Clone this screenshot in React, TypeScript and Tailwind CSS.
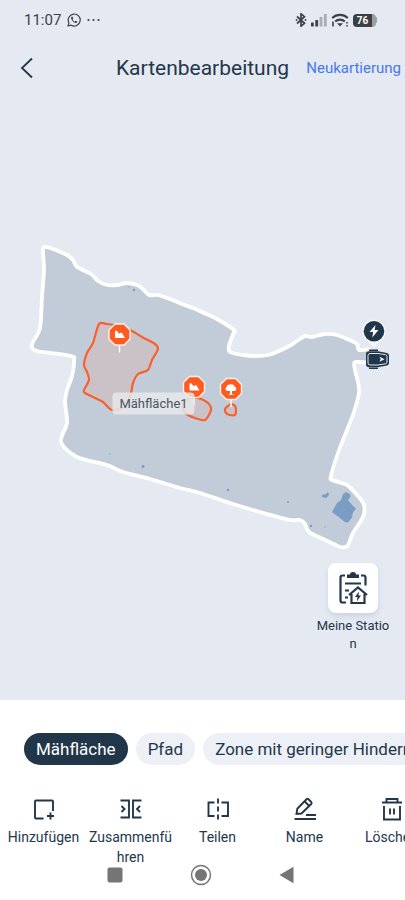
import type { ReactNode } from "react";
import clsx from "clsx";

type Point = [number, number];

// Closed Catmull-Rom curve through all points
function smooth(points: Point[]) {
  const n = points.length;
  let d = `M${points[0][0]} ${points[0][1]}`;
  for (let i = 0; i < n; i++) {
    const a = points[(i - 1 + n) % n];
    const b = points[i];
    const c = points[(i + 1) % n];
    const e = points[(i + 2) % n];
    d += `C${b[0] + (c[0] - a[0]) / 7} ${b[1] + (c[1] - a[1]) / 7} ${c[0] - (e[0] - b[0]) / 7} ${c[1] - (e[1] - b[1]) / 7} ${c[0]} ${c[1]}`;
  }
  return d + "Z";
}

const lawn: Point[] = [
  [43, 249], [46, 247], [53, 249], [67, 255], [73, 260], [77, 267], [91, 274], [98, 281], [107, 285],
  [117, 285], [127, 283], [137, 285], [143, 289], [149, 295], [158, 295], [170, 299], [182, 304],
  [193, 308], [204, 313], [217, 319], [234, 330], [233, 334], [229, 346], [230, 352], [243, 355],
  [257, 356], [268, 355], [279, 351], [291, 345], [303, 337], [307, 336], [312, 337], [325, 334],
  [337, 335], [347, 339], [357, 344], [359, 350], [370, 350], [370, 362], [355, 362], [355, 370],
  [358, 382], [359, 393], [354, 412], [347, 430], [338, 453], [331, 476], [332, 480], [347, 485],
  [357, 495], [364, 505], [363, 517], [353, 533], [348, 545], [345, 547], [340, 547], [323, 539],
  [309, 532], [305, 524], [300, 520], [290, 520], [267, 514], [233, 504], [200, 493], [180, 488],
  [150, 479], [123, 472], [107, 465], [77, 457], [61, 442], [67, 423], [65, 402], [67, 390],
  [72, 376], [74, 360], [71, 356], [37, 351], [32, 347], [33, 342], [40, 328], [42, 297], [44, 270],
];

const zones: Point[][] = [
  [
    [99, 324], [107, 324], [120, 326], [132, 331], [142, 337], [155, 344], [158, 349], [152, 360],
    [148, 370], [138, 374], [133, 383], [131, 393], [126, 406], [112, 410], [103, 402], [95, 398],
    [85, 393], [84, 390], [89, 380], [87, 372], [84, 365], [87, 353], [93, 343],
  ],
  [[190, 398], [198, 398], [208, 403], [211, 410], [205, 420], [195, 418], [185, 413], [183, 404]],
  [[228, 406], [231, 404], [235, 406], [236, 410], [235, 415], [230, 415], [226, 413], [225, 409]],
];

const chips = ["Mähfläche", "Pfad", "Zone mit geringer Hindernishöhe"];

const tools: { label: string; icon: ReactNode }[] = [
  {
    label: "Hinzufügen",
    icon: <path d="M11.5 21.500H4a1 1 0 0 1-1-1V4.500a1 1 0 0 1 1-1h16a1 1 0 0 1 1 1V14M18.500 15.500v7M15 19h7" />,
  },
  {
    label: "Zusammenführen",
    icon: <path d="M1.500 3.500h8.500v17H1.500M22.500 3.500h-8.500v17h8.500M2.500 9l3 3-3 3M21 9l-3 3 3 3" />,
  },
  {
    label: "Teilen",
    icon: <path d="M8.500 5.500H2.500v13.500h6M15.500 5.500H22v13.500h-6.500M12 1.500v5M12 9.500v5M12 17.500v5" />,
  },
  {
    label: "Name",
    icon: <path d="m3.500 17 .8-5.200L13.500 2.300a1.500 1.500 0 0 1 2 0l2.700 2.700a1.500 1.500 0 0 1 0 2L8.500 16.500ZM11.500 4.300l4.800 4.700M13 18h10M1.500 22h21.500" />,
  },
  {
    label: "Löschen",
    icon: <path d="M2 5.500h20M6.500 5V2h11v3M4 9v13.500h16V9M10 11.500v6M14 11.500v6" />,
  },
];

function Marker({ x, y, tree }: { x: number; y: number; tree?: boolean }) {
  return (
    <g transform={`translate(${x} ${y})`}>
      <path d="M0 10v8" stroke="#fff" strokeWidth="1.4" />
      <path d="M-4.500-10.500h9l6 6v9l-6 6h-9l-6-6v-9Z" fill="#ff5a1f" stroke="#fff0e8" strokeWidth="1.400" strokeLinejoin="round" />
      {tree ? (
        <path d="M-1 5V2h-2.500A2.200 2.200 0 0 1-4.500-2 3 3 0 0 1-1-4.500a3.500 3.500 0 0 1 4.500 2A2.300 2.300 0 0 1 3.500 2H1v3h1.500v.8h-5V5Z" fill="#fff" />
      ) : (
        <path d="M-4.500 3.500v-7l1.500-.5 2.800 3.300L1.500-2l1 .5 3 5Z" fill="#fff" />
      )}
    </g>
  );
}

function StatusBar() {
  return (
    <div className="flex h-10 items-center justify-between pl-6 pr-7 text-[#3c4248]">
      <div className="flex items-center gap-1.5">
        <span className="text-[15px] leading-5">11:07</span>
        <svg className="size-3.5" viewBox="0 0 14 14" fill="none" stroke="currentColor" strokeWidth="1.2">
          <path d="m1 13 .9-3.200A6 6 0 1 1 4.200 12.200Z" strokeLinejoin="round" />
          <path d="M4.500 3.800c-.8.800-.5 2 .5 3.500s2.800 2.800 4 2.700c.9-.1 1.400-.8 1.300-1.400L8.700 7.800l-.9.900C6.800 8.200 6 7.300 5.600 6.400l.7-.9-.7-1.700Z" fill="currentColor" stroke="none" />
        </svg>
        <svg className="h-1 w-3.5" viewBox="0 0 14 4" fill="currentColor">
          <circle cx="1.500" cy="2" r="1.100" />
          <circle cx="6.500" cy="2" r="1.100" />
          <circle cx="11.500" cy="2" r="1.100" />
        </svg>
      </div>
      <div className="flex items-center gap-1">
        <svg className="h-3.5 w-3" viewBox="0 0 12 14" fill="none" stroke="currentColor" strokeWidth="1.700">
          <path d="m2 3.500 7.500 6.800L6 13.200V.8l3.500 2.900L2 10.500" />
          <circle cx="1.500" cy="7" r=".9" fill="currentColor" stroke="none" />
          <circle cx="10.500" cy="7" r=".9" fill="currentColor" stroke="none" />
        </svg>
        <svg className="h-3.5 w-4" viewBox="0 0 16 14" fill="currentColor">
          <rect y="9.500" width="2.800" height="4" rx=".6" />
          <rect x="4.300" y="7" width="2.800" height="6.500" rx=".6" />
          <g fill="#a7adb7">
            <rect x="8.600" y="4" width="2.800" height="9.500" rx=".6" />
            <rect x="12.900" y="1" width="2.800" height="12.500" rx=".6" />
          </g>
        </svg>
        <svg className="h-3.5 w-[18px]" viewBox="0 0 18 14" fill="none" stroke="currentColor" strokeWidth="2.100">
          <path d="M1.200 5a11.200 11.200 0 0 1 15.600 0M4.200 8.500a7 7 0 0 1 9.600 0" />
          <path d="M6 10.200h6L9 13.500Z" fill="currentColor" stroke="none" />
          <path d="M2 8.500v5M16 9v1.500M16 12v1.500" strokeWidth="1.600" />
        </svg>
        <div className="flex items-center">
          <span className="flex h-[13px] w-[19px] items-center justify-center rounded-l bg-[#3c3f43] text-[10px] font-bold text-white">76</span>
          <span className="h-[13px] w-1 rounded-r bg-[#9a9fa6]" />
          <span className="h-1.5 w-px rounded-r bg-[#9a9fa6]" />
        </div>
      </div>
    </div>
  );
}

function GardenMap() {
  return (
    <svg className="block w-full" viewBox="0 95 405 605" fill="none" role="img" aria-label="Karte">
      <path d={smooth(lawn)} fill="#c2ccd8" stroke="#fff" strokeWidth="3.800" strokeLinejoin="round" />
      {/* obstacles picked up by the mower */}
      <g fill="#7b9dc3">
        <path d="m332 512 5-9 4-3 2-6 3-2 4 2 .5 3-2.500 3 4 5 4 3.500-3 4-1 5-4 5-3-.5Z" />
        <path d="m322 495 4-1 2-2 1 3-3 3-4-1Z" />
        <circle cx="134" cy="290" r="1.200" />
        <circle cx="129" cy="287" r=".6" />
        <circle cx="143" cy="466.500" r="1.400" />
        <circle cx="110" cy="454" r=".7" />
        <circle cx="228" cy="490" r="1.200" />
        <circle cx="288" cy="502" r=".9" />
        <circle cx="311" cy="526" r="1.200" />
        <circle cx="325" cy="527" r=".7" />
      </g>
      {zones.map((zone, i) => (
        <path key={i} d={smooth(zone)} fill="#ff8a70" fillOpacity=".15" stroke="#f9602f" strokeWidth="2.200" />
      ))}
      <Marker x={119.5} y={334.5} />
      <Marker x={194} y={387} />
      <Marker x={231} y={389} tree />

      <rect x="112.500" y="392.500" width="82" height="22" rx="4" fill="#e6e7eb" fillOpacity=".85" />
      <text x="153.500" y="407.500" textAnchor="middle" fontSize="13" fill="#4a5663">Mähfläche1</text>

      {/* charging station and docked mower */}
      <path d="M374 319.500a12 12 0 0 1 5 22.700L374 347l-5-4.800a12 12 0 0 1 5-22.700Z" fill="#f5f8fb" />
      <circle cx="374" cy="331.200" r="10.300" fill="#22364a" />
      <path d="m375.500 325-6 7h3.700l-1 5.500 6.300-7.500h-3.800Z" fill="#fff" />
      <path d="M369 350.200h9M369 368.200h9" stroke="#22364a" strokeWidth="1.600" />
      <path d="M369 351.300h9l9 1.700q2 .5 2 2.500v7.500q0 2-2 2.500l-9 1.700h-9q-3 0-3-3v-10q0-3 3-3Z" fill="#22364a" />
      <path d="M370 353.500h8l7.500 1.200q1.500.3 1.500 1.800v5.500q0 1.500-1.500 1.800l-7.500 1.200h-8q-2 0-2-2v-7.500q0-2 2-2Z" stroke="#dfe6ee" />
      <path d="m379.500 356.800 5 2.500-5 2.500 1.200-2.500Z" fill="#fff" />
    </svg>
  );
}

export default function App() {
  return (
    <div className="flex min-h-screen flex-col overflow-hidden bg-[#e4e9f2] font-['Roboto',sans-serif] text-[#24374a]">
      <StatusBar />
      <header className="grid h-[55px] grid-cols-[1fr_auto_1fr] items-center pr-1">
        <button aria-label="Zurück" className="w-fit pl-5">
          <svg className="h-6 w-3.5" viewBox="0 0 14 24" fill="none" stroke="currentColor" strokeWidth="1.800">
            <path d="M12 2.500 2 12l10 9.500" />
          </svg>
        </button>
        <h1 className="pl-1 text-[21px] leading-7">Kartenbearbeitung</h1>
        <a href="#neukartierung" className="justify-self-end text-[15px] leading-5 text-[#4678ee]">Neukartierung</a>
      </header>

      <main className="relative">
        <GardenMap />
        <button className="absolute bottom-[47px] right-3.5 flex w-[76px] flex-col items-center gap-1">
          <span className="flex size-[50px] items-center justify-center rounded-lg bg-white shadow-md shadow-slate-300">
            <svg className="size-9" viewBox="0 0 36 36" fill="none" stroke="currentColor" strokeWidth="2.200">
              <path d="M10 5.500H7.500Q5.500 5.500 5.500 7.500v23q0 2 2 2H11M26 5.500h2.500q2 0 2 2v8" />
              <path d="M12 4.500h3q0-2.500 3-2.500t3 2.500h3v3.500H12Z" fill="currentColor" stroke="none" />
              <path d="M10 13.500h16M10 20.500h4M10 27.500h3" strokeWidth="1.800" />
              <path d="m14 25 9-7.500 9 7.500M16.500 24v9h13V24" />
              <path d="m24 21.500-4 5.500h2.500l-.7 4.500 4.200-6h-2.500Z" fill="currentColor" stroke="none" />
            </svg>
          </span>
          <span className="break-all text-center text-[13px] leading-[18px]">Meine Station</span>
        </button>
      </main>

      <section className="grow bg-white pt-[33px]">
        <div className="flex gap-2 overflow-hidden pl-6">
          {chips.map((chip, i) => (
            <button
              key={chip}
              className={clsx(
                "h-8 shrink-0 rounded-full px-3 text-[17px] leading-6",
                i === 0 ? "bg-[#22364a] text-white" : "bg-[#edf1f7]",
              )}
            >
              {chip}
            </button>
          ))}
        </div>
        <div className="mt-8 flex overflow-hidden">
          {tools.map((tool) => (
            <button key={tool.label} className="flex w-[87px] shrink-0 flex-col items-center gap-1.5">
              <svg className="size-6" viewBox="0 0 24 24" fill="none" stroke="currentColor" strokeWidth="1.900">
                {tool.icon}
              </svg>
              <span className="break-all text-center text-sm">{tool.label}</span>
            </button>
          ))}
        </div>
        <nav className="flex h-4 items-center justify-center gap-16 pr-1 text-[#757575]">
          <button aria-label="Letzte Apps">
            <svg className="size-[22px]" viewBox="0 0 22 22" fill="currentColor">
              <rect x="3.500" y="3.500" width="15" height="15" rx="2" />
            </svg>
          </button>
          <button aria-label="Startseite">
            <svg className="size-[22px]" viewBox="0 0 22 22" fill="currentColor">
              <circle cx="11" cy="11" r="9.500" fill="none" stroke="currentColor" strokeWidth="1.500" />
              <circle cx="11" cy="11" r="6" />
            </svg>
          </button>
          <button aria-label="Zurück">
            <svg className="size-[22px]" viewBox="0 0 22 22" fill="currentColor">
              <path d="M3.500 11 17.500 2.800v16.400Z" strokeLinejoin="round" />
            </svg>
          </button>
        </nav>
      </section>
    </div>
  );
}
